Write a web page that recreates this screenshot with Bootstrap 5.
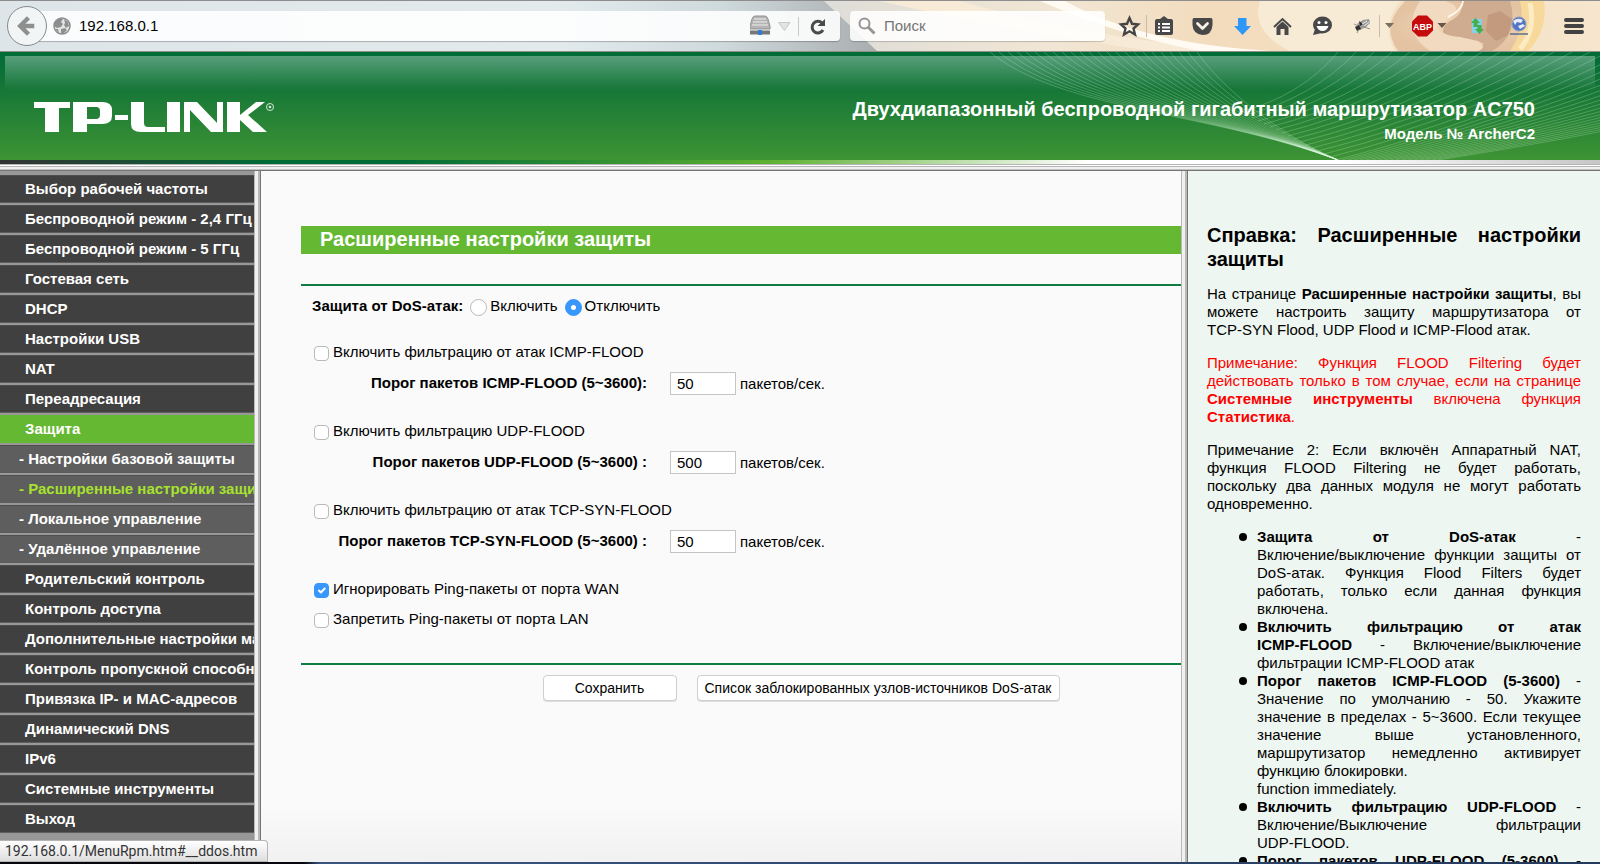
<!DOCTYPE html>
<html lang="ru">
<head>
<meta charset="utf-8">
<meta name="viewport" content="width=device-width, initial-scale=1">
<title>TP-LINK ArcherC2</title>
<link href="https://cdn.jsdelivr.net/npm/bootstrap@5.3.0/dist/css/bootstrap.min.css" rel="stylesheet">
<style>
  body { font-family: "Liberation Sans", Arial, sans-serif; font-size: 15px; line-height: 18px; color: #000; background: #fafafa; }
  a { text-decoration: none; }

  /* browser toolbar */
  .toolbar { height: 52px; border-top: 1px solid #8d8d8d; border-bottom: 1px solid #8f8f8a; background: #dde5e8; }
  .toolbar-art { position: absolute; inset: 0; width: 100%; height: 100%; }
  .address { height: 30px; background: rgba(255,255,255,.88); border-radius: 0 4px 4px 0; margin: 0 10px 0 27px; box-shadow: 0 1px 1px rgba(0,0,0,.25); }
  .back { position: absolute; left: 7px; top: 5px; width: 40px; height: 40px; padding: 0; border: 1px solid #858a8c; border-radius: 50%; background: #f2f5f6; }
  .bare { border: 0; background: none; outline: 0; padding: 0; color: #000; min-width: 0; font-size: 15px; line-height: 20px; }
  .searchbox { width: 255px; height: 30px; background: rgba(255,255,255,.88); border-radius: 4px; box-shadow: 0 1px 1px rgba(0,0,0,.2); }
  .searchbox input::placeholder { color: #757575; opacity: 1; }
  .tools { width: 487px; height: 30px; }
  .tools svg, .address svg, .searchbox svg, .back svg { display: block; flex: none; }

  /* router banner */
  .banner { height: 108px; background: linear-gradient(#006c36 0, #157637 36px, #3e9434 100%); }
  .gloss { position: absolute; inset: 4px 5px auto 5px; height: 34px; background: linear-gradient(rgba(255,255,255,.34), rgba(255,255,255,0)); }
  .waves { position: absolute; right: 0; top: 0; width: 610px; height: 108px; }
  .model { padding: 42px 65px 0 0; line-height: 20px; color: #fff; font-weight: bold; }
  .model h1 { font-size: 20px; line-height: 30px; font-weight: bold; margin: 0; }
  .logo { margin: 49px 0 0 34px; }
  .strip { height: 4px; background: linear-gradient(90deg, #333 0, #006b36 17%, #006b36 25%, #5cb031 48%, #fff 68%, #fff 84%, #c6c6c6 100%); }
  .frame-line { height: 7px; border-top: 1px solid #b5b5b5; border-bottom: 1px solid #757575; background: linear-gradient(#fff 0 1px, #b5b5b5 1px 2px, #f0f0f0 2px 4px, #c0c0c0 4px); }
  .frame-bar { flex: 0 0 7px; background: linear-gradient(90deg, #b8b8b8 0 1px, #f0f0f0 1px 4px, #b8b8b8 4px 6px, #757575 6px); }

  /* menu */
  .menu { flex: 0 0 254px; background: #979797; padding-top: 2px; overflow: hidden; }
  .menu a { display: block; height: 30px; padding-left: 25px; line-height: 28px; font-weight: bold; color: #fff; white-space: nowrap; background: #404040; border-top: 2px solid #989898; box-shadow: inset 0 1px #4e4e4e, inset 0 -1px #5d5d5d; }
  .menu a.sub { background: #5e5e5e; padding-left: 19px; }
  .menu a.current { background: #65b832; box-shadow: none; }
  .menu a.here { color: #a6e22e; }

  /* settings form */
  .settings { padding: 55px 0 0 40px; background: linear-gradient(#fafafa 92%, #f1f1f1 100%); overflow: hidden; }
  .settings h2 { font-size: 20px; line-height: 26px; margin: 0 0 30px; padding: 0 0 2px 19px; font-weight: bold; color: #fff; background: #65b832; }
  .rule { border: 0; height: 2px; margin: 0; background: #0f7c42; opacity: 1; }
  .fields { padding: 11px 0 35px 11px; }
  .fields .line { display: flex; align-items: center; height: 18px; }
  .fields .mode { margin-bottom: 28px; }
  .fields .form-check-input { width: 15px; height: 15px; margin: 2px 4px 0 2px; flex: none; border: 1px solid #b9b9b9; box-shadow: none; background-color: #fff; border-radius: 4px; }
  .fields .form-check-input[type=radio] { width: 17px; height: 17px; margin: 2px 3px 0 7px; border-radius: 50%; }
  .fields .form-check-input:checked { background-color: #3897fb; border-color: #3897fb; }
  .fields .form-check-input[type=radio]:checked { background-image: radial-gradient(circle, #fff 0 2px, transparent 3px); }
  .threshold { display: flex; align-items: center; height: 23px; margin: 11px 0 27px; }
  .threshold label { width: 335px; text-align: right; font-weight: bold; padding-bottom: 2px; }
  .threshold input { width: 66px; height: 23px; margin: 0 4px 0 23px; padding: 0 6px; border: 1px solid #c4c4c4; border-radius: 0; background: #fff; font-size: 15px; color: #000; }
  .last-line { margin-top: 12px; }
  .actions { gap: 20px; padding: 10px 0 0 120px; }
  .push { height: 26px; border: 1px solid #cfcfcf; border-radius: 4px; background: #fff; color: #000; font-size: 14px; line-height: 22px; padding: 0 7px; box-shadow: 0 1px #dedede; }
  .push.save { width: 134px; }

  /* help */
  .help { flex: 0 0 412px; background: #eef6f1; padding: 52px 19px 0; text-align: justify; overflow: hidden; }
  .help h2 { font-size: 20px; line-height: 24px; font-weight: bold; margin: 0 0 14px; }
  .help p { margin: 0 0 15px; }
  .help ul { margin: 0; padding-left: 50px; list-style: none; }
  .help li { position: relative; }
  .help li::before { content: ""; position: absolute; left: -18px; top: 5px; width: 8px; height: 8px; border-radius: 50%; background: #000; }
  .red { color: #f00; }

  .status { position: absolute; left: 0; bottom: 2px; height: 22px; padding: 0 10px 0 5px; line-height: 20px; font-family: Roboto, "Open Sans", sans-serif; font-size: 14px; color: #333; background: linear-gradient(#fff, #dedede); border: 1px solid #b4b4b4; border-left: 0; border-radius: 0 4px 0 0; }
  .edge { height: 2px; background: linear-gradient(90deg, #05070c 19%, #3b5580 20%, #24395c); }
</style>
</head>
<body>
<div class="vh-100 d-flex flex-column overflow-hidden position-relative">

  <header class="toolbar flex-shrink-0 position-relative d-flex align-items-center">
    <svg class="toolbar-art" viewBox="0 0 1600 50" preserveAspectRatio="none" aria-hidden="true">
      <defs>
        <linearGradient id="sky"><stop offset="0" stop-color="#dde5e8"/><stop offset=".35" stop-color="#e2eaec"/><stop offset=".45" stop-color="#cfdadd"/><stop offset=".56" stop-color="#a5a8a9"/></linearGradient>
        <linearGradient id="sand"><stop offset="0" stop-color="#deddd8"/><stop offset=".3" stop-color="#f1e6d4"/><stop offset=".5" stop-color="#f3dcbd"/><stop offset="1" stop-color="#f6e6cd"/></linearGradient>
        <radialGradient id="globe"><stop offset="0" stop-color="#f0d8bb"/><stop offset="1" stop-color="#e4c3a2"/></radialGradient>
      </defs>
      <rect width="1600" height="50" fill="url(#sky)"/>
      <path d="M824 0H1600V50H877Z" fill="url(#sand)"/>
      <path d="M960 0Q1100 40 1250 50H1150Q1000 28 880 0Z" fill="#f7ead7"/>
      <path d="M1065 0Q1140 42 1270 50H1200Q1120 35 1040 0Z" fill="#fffaf2"/>
      <path d="M1260 0H1400Q1380 25 1395 50H1290Q1250 30 1260 0Z" fill="#f8ebd5"/>
      <path d="M1405 0H1525Q1550 25 1520 50H1398Q1380 25 1405 0Z" fill="url(#globe)"/>
      <path d="M1460 0Q1466 12 1450 20Q1436 30 1450 38L1484 42Q1478 50 1470 50H1492Q1520 34 1510 0Z" fill="#cfab8f"/>
      <path d="M1488 14L1500 10L1512 18L1508 34L1496 40L1486 30Z" fill="#c39a7d"/>
      <path d="M1445 0Q1465 5 1449 18L1437 26Q1440 34 1460 36L1478 40Q1488 46 1478 50H1430Q1400 30 1420 0Z" fill="#f2dac0"/>
      <path d="M1463 0Q1462 10 1448 16" fill="none" stroke="#fff6ea" stroke-width="2"/>
      <path d="M1520 0H1544Q1548 30 1528 50H1510Q1526 28 1520 0Z" fill="#f8d99c"/>
      <path d="M1530 2Q1536 30 1520 48" fill="none" stroke="#fdebc4" stroke-width="5"/>
    </svg>

    <div class="address position-relative flex-grow-1 d-flex align-items-center">
      <svg class="ms-4 me-2" width="20" height="20" viewBox="0 0 20 20" aria-hidden="true"><circle cx="11" cy="10" r="8" fill="#e4e6e6" stroke="#8b8b8b" stroke-width="1.5"/><path d="M4 6L8 2L12 3L10 6L12 8L10 11L6 12L3 10ZM13 3L17 6L18 10L15 12L13 9L14 7ZM10 13L14 12L16 14L12 18L10 17ZM4 13L7 13L8 17Z" fill="#8e8e8e"/></svg>
      <input class="bare flex-grow-1" type="text" value="192.168.0.1" aria-label="Адрес">
      <svg width="90" height="24" viewBox="0 0 90 24" aria-hidden="true">
        <path d="M5 2H15Q17 2 18 5L20 12V15H0V12L2 5Q3 2 5 2Z" fill="#b4b4b4" stroke="#929292"/><path d="M4 5H16M3 8H17M2 11H18" stroke="#eee"/><path d="M0 18.500H20" stroke="#777" stroke-width="4"/><rect x="8" y="16" width="4" height="5" fill="#327bd9"/>
        <path d="M28.500 8.500H40L34.500 16.500Z" fill="#e3e3e3" stroke="#c7c7c7"/><path d="M48.500 3V22" stroke="#c8c8c8"/>
        <path d="M72 9A5.800 5.800 0 1 0 73 16" fill="none" stroke="#4a4a4a" stroke-width="3"/><path d="M75 5V12H67.500Z" fill="#4a4a4a"/>
      </svg>
    </div>
    <button class="back" type="button" aria-label="Назад"><svg width="38" height="38" viewBox="0 0 39 39"><path d="M21 11L12.500 19.500L21 28M13 19.500H27" fill="none" stroke="#8f8f8f" stroke-width="4.500"/></svg></button>

    <div class="searchbox position-relative d-flex align-items-center">
      <svg class="ms-2 me-2" width="18" height="18" viewBox="0 0 18 18" aria-hidden="true"><circle cx="6.500" cy="6.500" r="5" fill="none" stroke="#969696" stroke-width="2"/><path d="M10 10L16.500 16.500" stroke="#969696" stroke-width="3"/></svg>
      <input class="bare flex-grow-1" type="search" placeholder="Поиск" aria-label="Поиск">
    </div>

    <div class="tools position-relative ms-2">
      <svg width="487" height="30" viewBox="1113 11 487 30" aria-hidden="true">
        <path d="M1129.500 18L1132 23.800L1138 24.400L1133.500 28.500L1135 34.500L1129.500 31.300L1124 34.500L1125.500 28.500L1121 24.400L1127 23.800Z" fill="none" stroke="#454545" stroke-width="2.400"/>
        <path d="M1146.500 15V37M1379.500 15V37" stroke="#c9bba7"/>
        <path d="M1157 19H1160L1164 16L1168 19H1171Q1173 19 1173 21V33Q1173 35 1171 35H1157Q1155 35 1155 33V21Q1155 19 1157 19Z" fill="#484848"/><path d="M1158 24H1160M1162 24H1170M1158 27.500H1160M1162 27.500H1170M1158 31H1160M1162 31H1170" stroke="#fff" stroke-width="2"/>
        <path d="M1194 18H1211Q1212.500 18 1212.500 20V25Q1212 35 1202.500 35Q1193 34 1192.500 25V20Q1192.500 18 1194 18Z" fill="#484848"/><path d="M1197.500 23.500L1202.500 28.500L1207.500 23.500" fill="none" stroke="#f8f0e4" stroke-width="2.800" stroke-linecap="round" stroke-linejoin="round"/>
        <path d="M1238 18H1246.500V26H1251L1242.500 35L1234 26H1238Z" fill="#2e97f7"/>
        <path d="M1274 27L1282.500 19L1291 27" fill="none" stroke="#484848" stroke-width="2"/><path d="M1276.500 27L1282.500 21.500L1288.500 27V35H1284.500V29H1280.500V35H1276.500Z" fill="#484848"/>
        <ellipse cx="1322.500" cy="25" rx="9.500" ry="8.500" fill="#484848"/><path d="M1315 29L1313 35L1322 33Z" fill="#484848"/><circle cx="1319" cy="22.500" r="1.500" fill="#fff"/><circle cx="1326" cy="22.500" r="1.500" fill="#fff"/><path d="M1316.500 26H1328.500Q1327 31 1322.500 31T1316.500 26Z" fill="#fff"/>
        <path d="M1357 24L1363 20L1369 19L1370 23L1366 27L1360 30Z" fill="#9a9a9a"/><path d="M1355 27L1359 25L1361 29L1357 31ZM1359 21L1363 24L1360 26Z" fill="#2f2f2f"/><path d="M1359 29L1357 33M1364 27L1370 29M1354 24L1358 26" stroke="#777" stroke-width=".8"/><path d="M1362 24L1367 21M1364 26L1369 22" stroke="#ededed"/>
        <path d="M1385 23H1394L1389.500 28Z" fill="#786e62"/>
        <path d="M1418 15.500H1427L1433 21.500V30.500L1427 36.500H1418L1412 30.500V21.500Z" fill="#c50b0b"/>
        <text x="1422.500" y="30" text-anchor="middle" font-family="Liberation Sans, sans-serif" font-size="9" font-weight="bold" fill="#fff">ABP</text>
        <path d="M1437.500 23H1446.500L1442 28Z" fill="#675746"/>
        <path d="M1472 19H1482V33H1472Z" fill="#86d0e8"/><path d="M1475.500 18L1480 23H1477.500V27H1473.500V23H1471ZM1479.500 34L1475 29H1477.500V25H1481.500V29H1484Z" fill="#43ae4c"/>
        <circle cx="1519" cy="24" r="7" fill="#5474c4" stroke="#8d9fc4"/><path d="M1513 21Q1518 17 1523 20L1521 23L1517 22L1515 25ZM1518 26L1523 24L1525 26L1520 29Z" fill="#e6edf8"/><path d="M1510 34H1528" stroke="#5f6e8c" stroke-width="1.500"/>
        <path d="M1566 20H1582M1566 26H1582M1566 32H1582" stroke="#424242" stroke-width="4" stroke-linecap="round"/>
      </svg>
    </div>
  </header>

  <div class="banner flex-shrink-0 position-relative d-flex justify-content-between">
    <div class="gloss"></div>
    <svg class="waves" viewBox="990 52 610 108" aria-hidden="true"><g id="waves" fill="none" stroke="#d9f5dc" stroke-opacity=".24"></g></svg>
    <svg class="logo position-relative" width="242" height="34" viewBox="34 100 242 34" role="img" aria-label="TP-LINK">
      <g fill="#fff">
        <rect x="34" y="101" width="36" height="6"/><rect x="45" y="101" width="14" height="30"/>
        <path fill-rule="evenodd" d="M73 101H102Q112 101 112 109V115Q112 123 102 123H87V131H73ZM87 106V118H96Q100 118 100 114V110Q100 106 96 106Z"/>
        <rect x="115" y="114" width="13" height="5"/>
        <path d="M131 101H144V122Q144 126 148 126H165V131H141Q131 131 131 123Z"/>
        <rect x="167" y="101" width="13" height="30"/>
        <path d="M184 101H197L217 122V101H223V131H211L190 109V131H184Z"/>
        <path d="M227 101H240V114L256 101H265L248 114L267 131H253L240 119V131H227Z"/>
      </g>
      <circle cx="270" cy="106" r="3.500" fill="none" stroke="#d6ead6"/><circle cx="270" cy="106" r="1.300" fill="#d6ead6"/>
    </svg>
    <div class="model position-relative text-end">
      <h1>Двухдиапазонный беспроводной гигабитный маршрутизатор AC750</h1>
      <div>Модель № ArcherC2</div>
    </div>
  </div>
  <div class="strip flex-shrink-0"></div>
  <div class="frame-line flex-shrink-0"></div>

  <div class="d-flex flex-grow-1 overflow-hidden">
    <nav class="menu">
      <a href="#">Выбор рабочей частоты</a>
      <a href="#">Беспроводной режим - 2,4 ГГц</a>
      <a href="#">Беспроводной режим - 5 ГГц</a>
      <a href="#">Гостевая сеть</a>
      <a href="#">DHCP</a>
      <a href="#">Настройки USB</a>
      <a href="#">NAT</a>
      <a href="#">Переадресация</a>
      <a href="#" class="current">Защита</a>
      <a href="#" class="sub">- Настройки базовой защиты</a>
      <a href="#" class="sub here">- Расширенные настройки защиты</a>
      <a href="#" class="sub">- Локальное управление</a>
      <a href="#" class="sub">- Удалённое управление</a>
      <a href="#">Родительский контроль</a>
      <a href="#">Контроль доступа</a>
      <a href="#">Дополнительные настройки маршрутизации</a>
      <a href="#">Контроль пропускной способности</a>
      <a href="#">Привязка IP- и MAC-адресов</a>
      <a href="#">Динамический DNS</a>
      <a href="#">IPv6</a>
      <a href="#">Системные инструменты</a>
      <a href="#">Выход</a>
    </nav>
    <div class="frame-bar"></div>

    <main class="settings flex-grow-1">
      <h2>Расширенные настройки защиты</h2>
      <hr class="rule">
      <form id="dos">
        <div class="fields">
          <div class="line mode">
            <b>Защита от DoS-атак:</b>
            <input class="form-check-input" type="radio" name="dosp" id="on"><label for="on">Включить</label>
            <input class="form-check-input" type="radio" name="dosp" id="off" checked><label for="off">Отключить</label>
          </div>
          <div class="line"><input class="form-check-input" type="checkbox" id="c1"><label for="c1">Включить фильтрацию от атак ICMP-FLOOD</label></div>
          <div class="threshold"><label for="t1">Порог пакетов ICMP-FLOOD (5~3600):</label><input type="text" id="t1" value="50"><span>пакетов/сек.</span></div>
          <div class="line"><input class="form-check-input" type="checkbox" id="c2"><label for="c2">Включить фильтрацию UDP-FLOOD</label></div>
          <div class="threshold"><label for="t2">Порог пакетов UDP-FLOOD (5~3600) :</label><input type="text" id="t2" value="500"><span>пакетов/сек.</span></div>
          <div class="line"><input class="form-check-input" type="checkbox" id="c3"><label for="c3">Включить фильтрацию от атак TCP-SYN-FLOOD</label></div>
          <div class="threshold"><label for="t3">Порог пакетов TCP-SYN-FLOOD (5~3600) :</label><input type="text" id="t3" value="50"><span>пакетов/сек.</span></div>
          <div class="line"><input class="form-check-input" type="checkbox" id="c4" checked><label for="c4">Игнорировать Ping-пакеты от порта WAN</label></div>
          <div class="line last-line"><input class="form-check-input" type="checkbox" id="c5"><label for="c5">Запретить Ping-пакеты от порта LAN</label></div>
        </div>
        <hr class="rule">
        <div class="actions d-flex justify-content-center">
          <button type="button" class="push save">Сохранить</button>
          <button type="button" class="push">Список заблокированных узлов-источников DoS-атак</button>
        </div>
      </form>
    </main>
    <div class="frame-bar"></div>

    <aside class="help">
      <h2>Справка: Расширенные настройки защиты</h2>
      <p>На странице <b>Расширенные настройки защиты</b>, вы можете настроить защиту маршрутизатора от <span class="text-nowrap">TCP-SYN</span> Flood, UDP Flood и ICMP-Flood атак.</p>
      <p class="red">Примечание: Функция FLOOD Filtering будет действовать только в том случае, если на странице <b>Системные инструменты</b> включена функция <b>Статистика</b>.</p>
      <p>Примечание 2: Если включён Аппаратный NAT, функция FLOOD Filtering не будет работать, поскольку два данных модуля не могут работать одновременно.</p>
      <ul>
        <li><b>Защита от DoS-атак</b> - <span class="text-nowrap">Включение/выключение</span> функции защиты от DoS-атак. Функция Flood Filters будет работать, только если данная функция включена.</li>
        <li><b>Включить фильтрацию от атак <span class="text-nowrap">ICMP-FLOOD</span></b> - <span class="text-nowrap">Включение/выключение</span> фильтрации ICMP-FLOOD атак</li>
        <li><b>Порог пакетов ICMP-FLOOD (5-3600)</b> - Значение по умолчанию - 50. Укажите значение в пределах - 5~3600. Если текущее значение выше установленного, маршрутизатор немедленно активирует функцию блокировки.<br>function immediately.</li>
        <li><b>Включить фильтрацию UDP-FLOOD</b> - <span class="text-nowrap">Включение/Выключение</span> фильтрации <span class="text-nowrap">UDP-FLOOD.</span></li>
        <li class="last-item"><b>Порог пакетов UDP-FLOOD (5-3600)</b> - Значение по умолчанию - 500.</li>
      </ul>
    </aside>
  </div>
  <div class="edge flex-shrink-0"></div>
  <div class="status">192.168.0.1/MenuRpm.htm#__ddos.htm</div>
</div>
<script src="https://cdn.jsdelivr.net/npm/bootstrap@5.3.0/dist/js/bootstrap.bundle.min.js"></script>
<script>
  // two fans of thin curves that cross in the banner
  let d = '';
  for (let i = 0; i < 24; i++) {
    d += `<path d="M${990 + i * 9} 52C${1060 + i * 7} ${110 - i} ${1210 + i * 3} ${112 + i} 1338 160"/>`;
  }
  for (let i = 0; i < 34; i++) {
    const x = 1338 + i * 18, endX = 1240 + i * 6, endY = Math.min(160, 112 + i * 3);
    d += `<path d="M${x} 52Q${(x + endX) / 2 + 12} ${(52 + endY) / 2 + 14} ${endX} ${endY}"/>`;
  }
  document.getElementById('waves').innerHTML = d;
</script>
</body>
</html>
